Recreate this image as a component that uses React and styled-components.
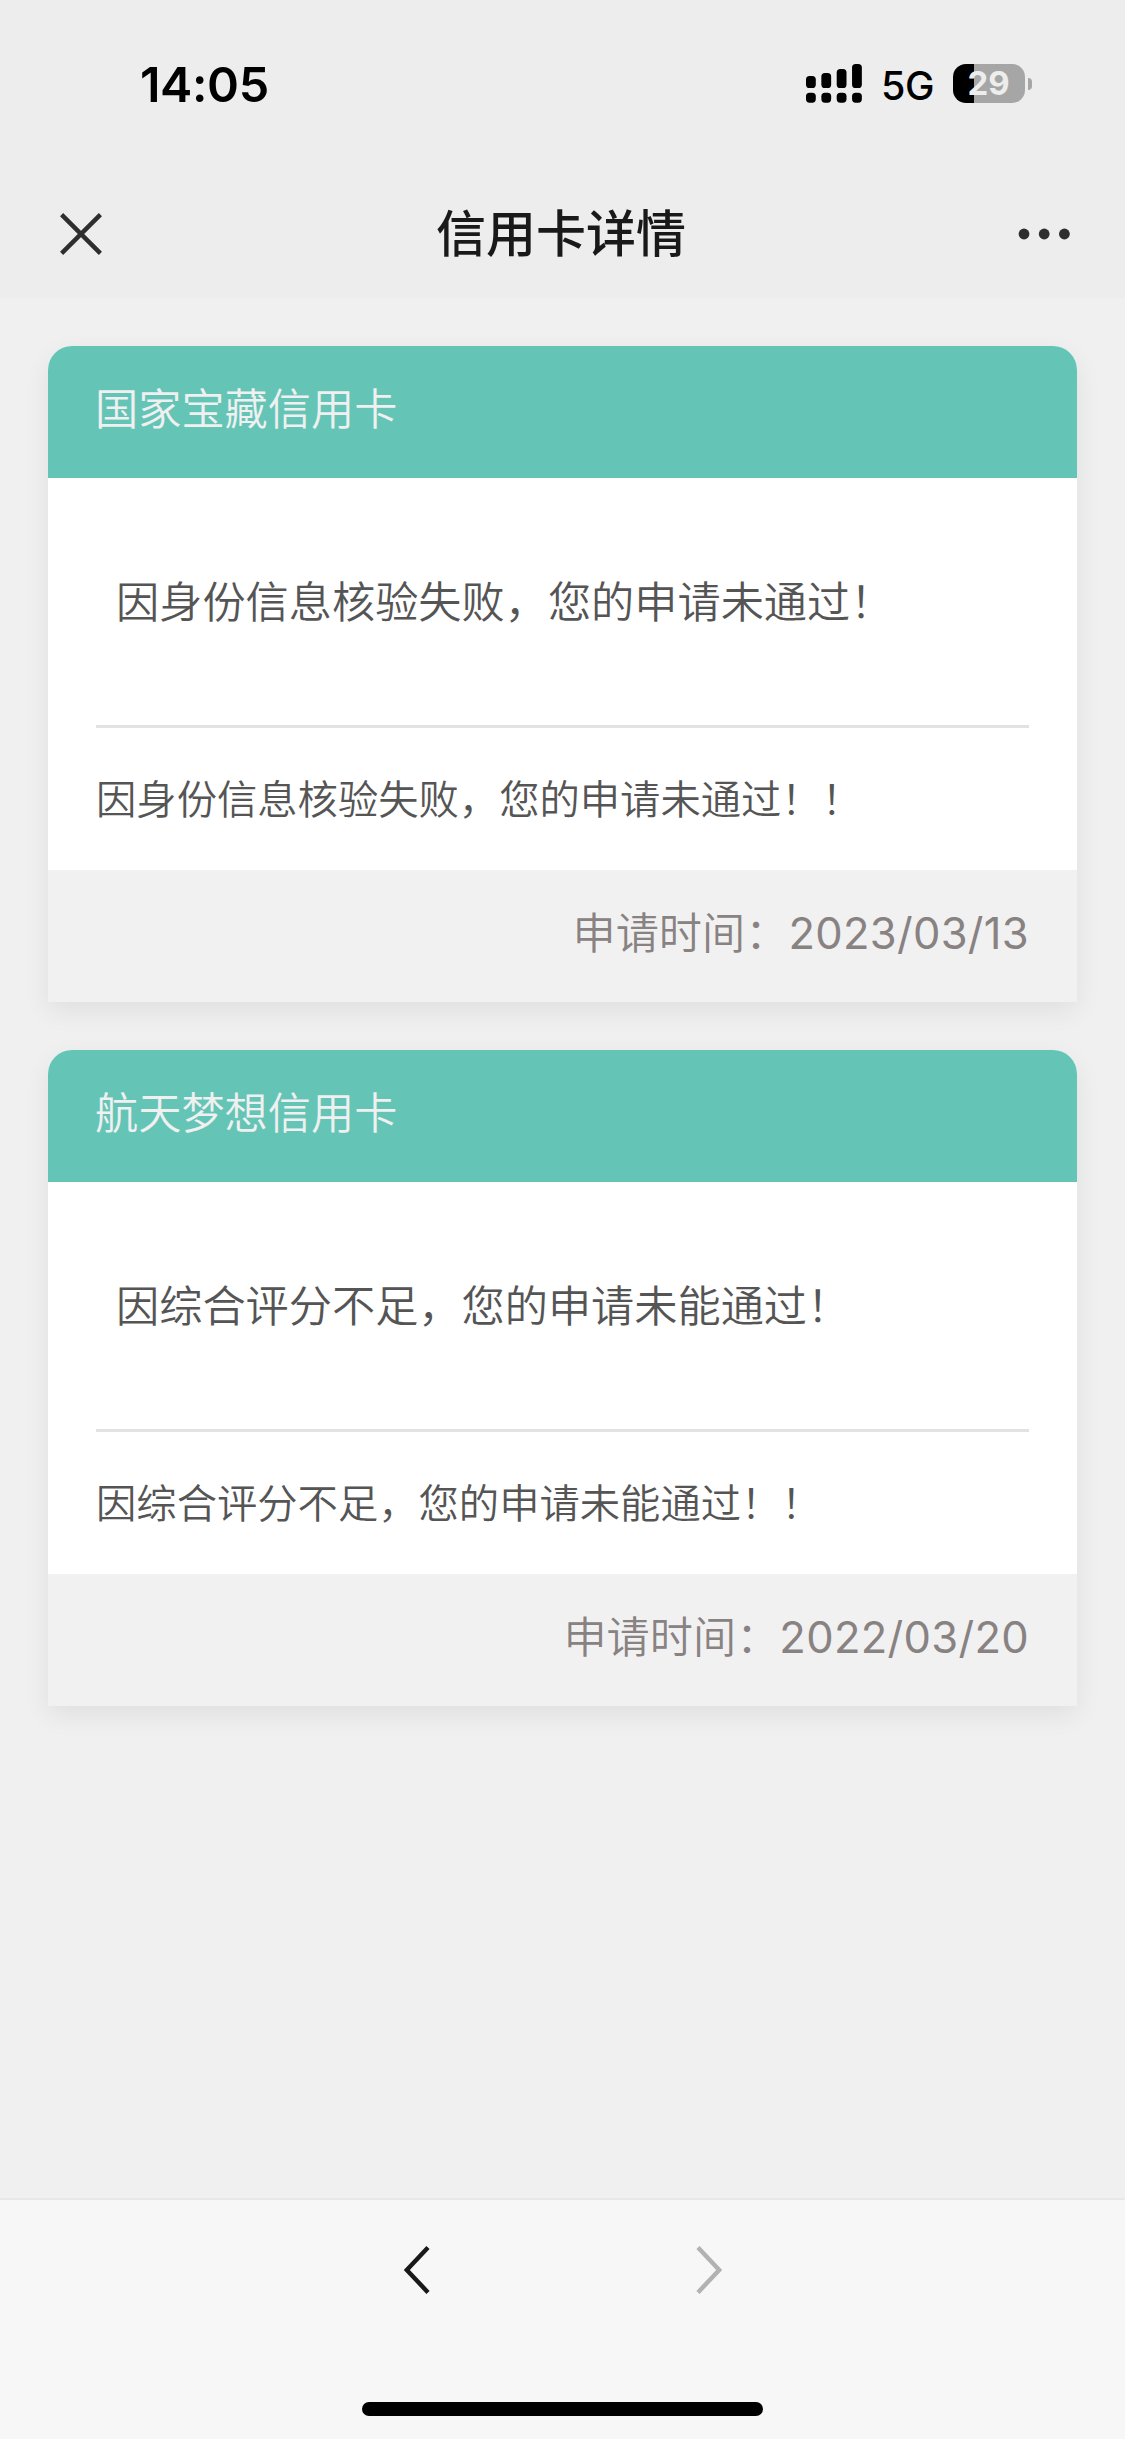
import React from "react";
import styled, { createGlobalStyle } from "styled-components";

const GlobalStyle = createGlobalStyle`
  * {
    box-sizing: border-box;
  }

  body {
    margin: 0;
    background-color: #f0f0f0;
    font-family: "Inter", "Noto Sans CJK SC", sans-serif;
  }
`;

const Screen = styled.div`
  display: flex;
  flex-direction: column;
  width: 1125px;
  height: 2439px;
  overflow: hidden;
`;

const StatusBar = styled.header`
  display: flex;
  justify-content: space-between;
  align-items: center;
  height: 168px;
  padding: 0 93px 0 140px;
  background-color: #ededed;
`;

const Time = styled.time`
  padding-top: 1px;
  font-size: 48.5px;
  font-weight: 600;
  line-height: 60px;
  letter-spacing: -0.4px;
  color: #000;
`;

const StatusIcons = styled.div`
  display: flex;
  align-items: center;
  padding-bottom: 1px;
`;

const Network = styled.span`
  margin: 4px 19px 0;
  font-size: 39.5px;
  font-weight: 450;
  line-height: 40px;
  letter-spacing: -0.5px;
  color: #000;
`;

const Battery = styled.div`
  display: flex;
  align-items: center;
  gap: 3px;
`;

const BatteryBody = styled.div`
  display: flex;
  align-items: center;
  justify-content: center;
  width: 72px;
  height: 39px;
  padding-right: 1px;
  border-radius: 13px;
  background: linear-gradient(to right, #000 ${(props) => props.$level}%, #a6a6a6 ${(props) => props.$level}%);
  font-size: 33px;
  font-weight: 650;
  line-height: 39px;
  color: #ededed;
`;

const BatteryTip = styled.div`
  width: 4px;
  height: 12px;
  border-radius: 0 4px 4px 0;
  background-color: #a6a6a6;
`;

const NavBar = styled.nav`
  display: grid;
  grid-template-columns: 42px 1fr 52px;
  align-items: center;
  height: 130px;
  padding: 2px 55px 0 60px;
  background-color: #ededed;
`;

const PageTitle = styled.h1`
  margin: 0;
  padding: 0 0 8px 2px;
  text-align: center;
  font-family: "Noto Sans CJK SC", sans-serif;
  font-size: 50px;
  font-weight: 500;
  line-height: 72px;
  color: #191919;
`;

const Content = styled.main`
  display: flex;
  flex-direction: column;
  flex-grow: 1;
  gap: 48px;
  padding: 48px;
`;

const Card = styled.article`
  border-radius: 24px 24px 0 0;
  background-color: #fff;
  font-family: "Noto Sans CJK SC", sans-serif;
  font-weight: 350;
  color: #555;
  box-shadow: 0 9px 27px rgba(0, 0, 0, 0.07);
`;

const CardHeader = styled.h2`
  height: 132px;
  margin: 0;
  padding: 0 47px;
  border-radius: 24px 24px 0 0;
  background-color: #64c5b6;
  font-size: 43.2px;
  font-weight: inherit;
  line-height: 121px;
  color: #f0f0f0;
`;

const Status = styled.p`
  height: 250px;
  margin: 0 48px;
  padding-left: 20px;
  border-bottom: 3px solid #e2e2e2;
  font-size: 43.2px;
  line-height: 243px;
`;

const Reason = styled.p`
  height: 142px;
  margin: 0;
  padding: 0 48px;
  font-size: 40.32px;
  line-height: 138px;
`;

const CardFooter = styled.footer`
  height: 132px;
  padding: 0 48px;
  background-color: #f1f1f1;
  text-align: right;
  font-size: 43.2px;
  line-height: 121px;
  color: #888282;
`;

const AppliedDate = styled.span`
  font-family: "Inter", sans-serif;
  font-size: 43.5px;
  font-weight: 400;
  letter-spacing: 0.3px;
`;

const BottomBar = styled.footer`
  display: flex;
  flex-direction: column;
  align-items: center;
  justify-content: space-between;
  height: 241px;
  padding: 46px 0 23px;
  border-top: 2px solid #e8e8e8;
  background-color: #f7f7f7;
`;

const HistoryButtons = styled.div`
  display: flex;
  gap: 266px;
`;

const HomeIndicator = styled.div`
  width: 401px;
  height: 14px;
  border-radius: 7px;
  background-color: #000;
`;

const applications = [
  {
    name: "国家宝藏信用卡",
    status: "因身份信息核验失败，您的申请未通过！",
    reason: "因身份信息核验失败，您的申请未通过！！",
    date: "2023/03/13",
  },
  {
    name: "航天梦想信用卡",
    status: "因综合评分不足，您的申请未能通过！",
    reason: "因综合评分不足，您的申请未能通过！！",
    date: "2022/03/20",
  },
];

// Dual SIM signal: tall bars on top, a row of squares below
const SignalIcon = () => (
  <svg width="56" height="39" viewBox="0 0 56 39">
    {[12, 9, 5, 0].map((top, index) => (
      <React.Fragment key={top}>
        <rect x={index * 15.35} y={top} width="9.8" height={24 - top} rx="3.6" />
        <rect x={index * 15.35} y="28.7" width="9.8" height="10" rx="3.6" />
      </React.Fragment>
    ))}
  </svg>
);

const CloseIcon = () => (
  <svg width="42" height="42" viewBox="0 0 42 42">
    <path d="M1.6 1.6 40.4 40.4M40.4 1.6 1.6 40.4" stroke="#2e2e2e" strokeWidth="4.4" />
  </svg>
);

const MoreIcon = () => (
  <svg width="52" height="12" viewBox="0 0 52 12" fill="#2e2e2e">
    <circle cx="6" cy="6" r="5.4" />
    <circle cx="26.2" cy="6" r="5.4" />
    <circle cx="46.4" cy="6" r="5.4" />
  </svg>
);

const BackIcon = () => (
  <svg width="26" height="48" viewBox="0 0 26 48" fill="none">
    <path d="M24 1.6 2.8 24 24 46.4" stroke="#191919" strokeWidth="4.4" />
  </svg>
);

const ForwardIcon = () => (
  <svg width="26" height="48" viewBox="0 0 26 48" fill="none">
    <path d="M2 1.6 23.2 24 2 46.4" stroke="#b2b2b2" strokeWidth="4.4" />
  </svg>
);

const ApplicationCard = ({ name, status, reason, date }) => (
  <Card>
    <CardHeader>{name}</CardHeader>
    <Status>{status}</Status>
    <Reason>{reason}</Reason>
    <CardFooter>
      申请时间：<AppliedDate>{date}</AppliedDate>
    </CardFooter>
  </Card>
);

const App = () => {
  return (
    <>
      <GlobalStyle />
      <Screen>
        <StatusBar>
          <Time>14:05</Time>
          <StatusIcons>
            <SignalIcon />
            <Network>5G</Network>
            <Battery>
              <BatteryBody $level={29}>29</BatteryBody>
              <BatteryTip />
            </Battery>
          </StatusIcons>
        </StatusBar>
        <NavBar>
          <CloseIcon />
          <PageTitle>信用卡详情</PageTitle>
          <MoreIcon />
        </NavBar>
        <Content>
          {applications.map((application) => (
            <ApplicationCard key={application.name} {...application} />
          ))}
        </Content>
        <BottomBar>
          <HistoryButtons>
            <BackIcon />
            <ForwardIcon />
          </HistoryButtons>
          <HomeIndicator />
        </BottomBar>
      </Screen>
    </>
  );
};

export default App;
